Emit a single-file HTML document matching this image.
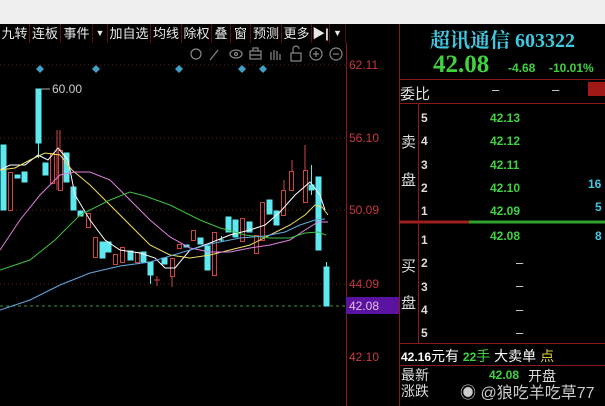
<!DOCTYPE html><html><head><meta charset="utf-8"><style>
*{margin:0;padding:0;box-sizing:border-box}
body{width:605px;height:406px;overflow:hidden;background:#000;font-family:"Liberation Sans","Noto Sans CJK SC",sans-serif;position:relative}
.top{position:absolute;left:0;top:0;width:605px;height:24px;background:#f0f0f0}
.t{position:absolute;white-space:nowrap}
.tb{position:absolute;top:24px;height:19px;color:#e8e8e8;font-size:13px;line-height:19px;border-right:1px solid #5a1010;text-align:center}
.ax{position:absolute;left:349px;color:#c8393b;font-size:12px}
.g{color:#3fd23f;font-family:"Liberation Sans",sans-serif;font-weight:bold;font-size:12px}
.w{color:#ddd;font-size:13px}
</style></head><body>
<div class="top"></div>
<div class="tb" style="left:0;width:30px">九转</div>
<div class="tb" style="left:30px;width:31px">连板</div>
<div class="tb" style="left:61px;width:32px">事件</div>
<div class="tb" style="left:93px;width:15px;font-size:9px">▼</div>
<div class="tb" style="left:108px;width:43px">加自选</div>
<div class="tb" style="left:151px;width:31px">均线</div>
<div class="tb" style="left:182px;width:30px">除权</div>
<div class="tb" style="left:212px;width:19px">叠</div>
<div class="tb" style="left:231px;width:20px">窗</div>
<div class="tb" style="left:251px;width:31px">预测</div>
<div class="tb" style="left:282px;width:30px">更多</div>
<div class="tb" style="left:312px;width:18px;font-weight:bold">▶|</div>
<div class="tb" style="left:330px;width:16px;font-size:9px">▼</div>
<svg style="position:absolute;left:0;top:0" width="605" height="406">
<g fill="none" stroke="#888" stroke-width="1.2">
<circle cx="196" cy="54" r="5"/><path d="M210 60l8-10"/><ellipse cx="236" cy="54" rx="6" ry="4"/><circle cx="236" cy="54" r="1.5"/>
<rect x="250" y="51" width="11" height="8"/><path d="M253 51v-3h5v3M250 55h11"/><path d="M271 60v-8m3 8v-10m3 10v-9m3 9v-6"/><rect x="291" y="53" width="10" height="8"/><path d="M293 53v-4a3 3 0 0 1 6 0"/>
<circle cx="316" cy="54" r="6"/><path d="M313 54h6M316 51v6"/><circle cx="336" cy="54" r="6"/><path d="M333 54h6"/></g>
<g fill="#3fa0c8"><path d="M40 65l4 4-4 4-4-4z"/><path d="M96 65l4 4-4 4-4-4z"/><path d="M179 65l4 4-4 4-4-4z"/><path d="M242 65l4 4-4 4-4-4z"/><path d="M263 65l4 4-4 4-4-4z"/></g>
<g stroke="#5a2020" stroke-dasharray="1,3"><path d="M0 65H346M0 138H346M0 210H346M0 284H346"/></g>
<path d="M0 306H346" stroke="#3a9a3a" stroke-dasharray="3,3"/>
<path d="M346.5 43V406" stroke="#8a1a1a"/>
<path d="M399.5 24V406" stroke="#8a1a1a"/>
<rect x="346" y="297" width="53" height="17" fill="#5a12a0"/>
<path d="M40 89H50" stroke="#aaa"/>
<text x="52" y="93" fill="#ccc" font-size="12" font-family="Liberation Sans">60.00</text>
<g stroke="#d24242" fill="none">
<rect x="8.5" y="172.5" width="4" height="38"/><path d="M57 130v20m0 40v-40"/><rect x="50.5" y="153.5" width="4" height="30"/><rect x="58.5" y="150.5" width="4" height="40"/><path d="M60 130v20"/>
<rect x="86.5" y="213.5" width="4" height="14"/><rect x="93.5" y="237.5" width="4" height="20"/><rect x="113.5" y="254.5" width="4" height="10"/><rect x="120.5" y="247.5" width="4" height="15"/><rect x="135.5" y="252.5" width="4" height="10"/>
<path d="M157 276v10M154 280h6"/><rect x="170.5" y="258.5" width="4" height="18"/><path d="M172 277v10"/><rect x="177.5" y="244.5" width="4" height="4"/><rect x="191.5" y="230.5" width="4" height="10"/><rect x="212.5" y="232.5" width="4" height="43"/><rect x="240.5" y="218.5" width="4" height="23"/><rect x="254.5" y="235.5" width="4" height="18"/><rect x="260.5" y="202.5" width="4" height="38"/><rect x="281.5" y="190.5" width="4" height="25"/><rect x="289.5" y="171.5" width="4" height="19"/><rect x="303.5" y="170.5" width="4" height="32"/><path d="M305 145v25M292 160v12M284 180v10"/></g>
<g fill="#5ee8f0" stroke="#5ee8f0">
<rect x="1" y="145" width="5" height="65"/><rect x="15" y="175" width="5" height="3"/><rect x="22" y="172" width="5" height="10"/><rect x="36" y="89" width="5" height="54"/><path d="M38.5 143v15"/><rect x="43" y="163" width="5" height="12"/><rect x="64" y="153" width="5" height="29"/><rect x="71" y="187" width="5" height="23"/><rect x="78" y="211" width="5" height="5"/><rect x="100" y="242" width="5" height="16"/><rect x="106" y="242" width="5" height="10"/><rect x="128" y="251" width="5" height="9"/><rect x="141" y="252" width="5" height="10"/><rect x="148" y="262" width="5" height="13"/><path d="M150.5 275v9"/><rect x="162" y="258" width="5" height="6"/><rect x="184" y="245" width="5" height="2"/><rect x="198" y="238" width="5" height="6"/><rect x="205" y="246" width="5" height="24"/><path d="M219 240h5M221.5 236v6"/><rect x="226" y="217" width="5" height="15"/><rect x="233" y="220" width="5" height="17"/><rect x="247" y="222" width="5" height="10"/><rect x="267" y="200" width="5" height="14"/><rect x="274" y="211" width="5" height="14"/><rect x="309" y="185" width="5" height="5"/><path d="M311.5 165v30"/><rect x="316" y="177" width="5" height="73"/><rect x="324" y="267" width="5" height="39"/><path d="M326.5 262v5"/></g>
<g fill="none" stroke-width="1">
<polyline stroke="#fff" points="0,170 10,165 25,165 38,155 48,160 58,148 68,160 75,195 90,220 105,240 120,250 140,253 155,258 165,268 175,268 190,250 210,243 230,235 250,230 265,225 280,212 295,195 310,182 320,195 325,210"/>
<polyline stroke="#f0e060" points="0,170 15,168 30,160 45,153 60,155 72,170 90,185 110,205 130,225 150,245 170,255 190,258 210,255 230,250 250,245 270,235 290,225 305,215 315,205 322,207 328,215"/>
<polyline stroke="#e080e0" points="0,250 20,220 40,195 60,175 75,172 90,172 110,180 130,200 150,220 170,237 190,248 210,252 230,252 250,248 270,245 290,240 305,230 318,222 328,222"/>
<polyline stroke="#40c040" points="0,270 30,260 55,240 80,215 110,200 130,192 145,196 170,205 200,220 220,228 245,235 270,238 290,238 305,233 318,232 326,235"/>
<polyline stroke="#60a8e0" points="0,310 30,300 60,285 90,273 120,266 150,262 180,253 210,244 240,238 265,236 285,232 300,225 315,220 325,219"/>
</g>
<path d="M399 222H469" stroke="#a02020" stroke-width="3"/><path d="M469 222H605" stroke="#30a030" stroke-width="3"/>
<g stroke="#8a1a1a"><path d="M399 79.5H605M399 103.5H605M399 343.5H605M399 365.5H605"/><path d="M418.5 103V343"/></g>
<rect x="588" y="82" width="17" height="14" fill="#a01818"/>
</svg>
<div class="ax" style="top:58px">62.11</div><div class="ax" style="top:131px">56.10</div><div class="ax" style="top:203px">50.09</div><div class="ax" style="top:277px">44.09</div><div class="ax" style="top:299px;color:#e0c0e0">42.08</div><div class="ax" style="top:350px">42.10</div>
<div class="t" style="left:430px;top:24px;color:#40c8e0;font-size:20px;font-weight:bold;font-family:'Liberation Serif','Noto Serif CJK SC',serif">超讯通信 603322</div>
<div class="t" style="left:433px;top:51px;color:#3fd23f;font-size:25px;font-weight:bold;font-family:'Liberation Serif',serif">42.08</div>
<div class="t g" style="left:508px;top:61px">-4.68</div><div class="t g" style="left:549px;top:61px">-10.01%</div>
<div class="t w" style="left:400px;top:83px;font-size:15px">委比</div>
<div class="t w" style="left:492px;top:82px">–</div><div class="t w" style="left:552px;top:82px">–</div>
<div class="t w" style="left:401px;top:131px;font-size:15px">卖</div><div class="t w" style="left:401px;top:169px;font-size:15px">盘</div>
<div class="t w" style="left:401px;top:255px;font-size:15px">买</div><div class="t w" style="left:401px;top:292px;font-size:15px">盘</div>
<div class="t" style="left:421px;top:107px;color:#ddd;font-size:12px;font-weight:bold;line-height:23.3px">5<br>4<br>3<br>2<br>1</div>
<div class="t" style="left:421px;top:229px;color:#ddd;font-size:12px;font-weight:bold;line-height:23.3px">1<br>2<br>3<br>4<br>5</div>
<div class="t g" style="left:490px;top:107px;line-height:23.3px">42.13<br>42.12<br>42.11<br>42.10<br>42.09</div>
<div class="t g" style="left:490px;top:229px">42.08</div>
<div class="t w" style="left:516px;top:251px;line-height:23.3px">–<br>–<br>–<br>–</div>
<div class="t" style="left:588px;top:177px;color:#40c8e0;font-size:12px;font-weight:bold">16</div>
<div class="t" style="left:595px;top:200px;color:#40c8e0;font-size:12px;font-weight:bold">5</div>
<div class="t" style="left:595px;top:229px;color:#40c8e0;font-size:12px;font-weight:bold">8</div>
<div class="t" style="left:401px;top:346px;color:#fff;font-size:14px"><b style="font-size:12px">42.16</b>元有 <span style="color:#3fd23f;font-size:12px;font-weight:bold">22</span><span style="color:#3fd23f">手</span> 大卖单 <span style="color:#e0d040">点</span></div>
<div class="t w" style="left:401px;top:367px;font-size:14px;line-height:16px">最新<br>涨跌</div>
<div class="t g" style="left:489px;top:368px">42.08</div><div class="t w" style="left:528px;top:366px;font-size:14px">开盘</div>
<div class="t" style="left:460px;top:379px;color:#ccc;font-size:16px">◉ @狼吃羊吃草77</div>
</body></html>
